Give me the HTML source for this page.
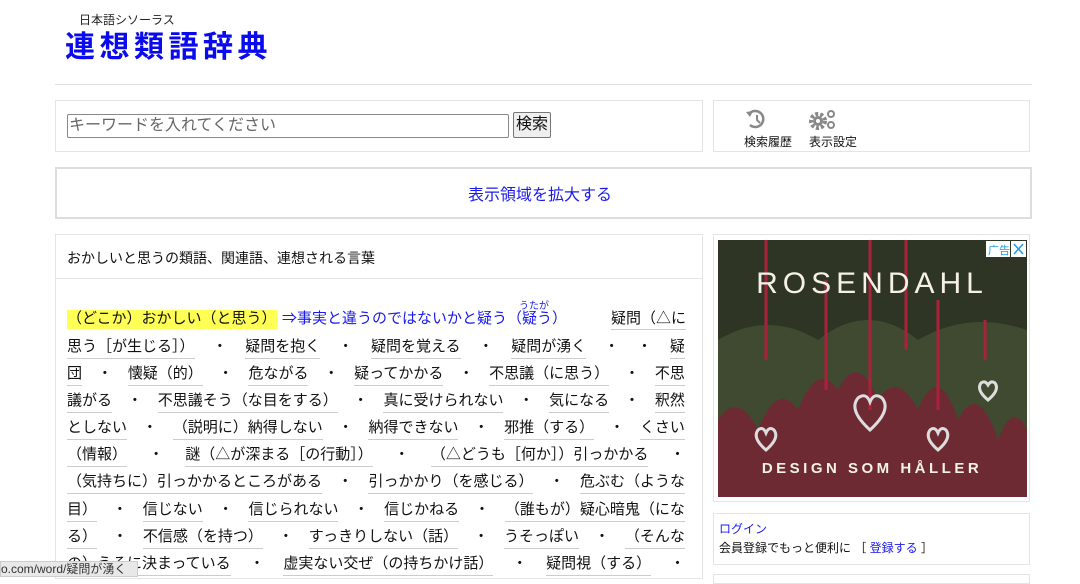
<!DOCTYPE html>
<html><head><meta charset="utf-8"><style>
*{margin:0;padding:0;box-sizing:border-box}
body{width:1080px;height:577px;overflow:hidden;background:#fff;font-family:"Liberation Sans","Noto Sans CJK JP",sans-serif;color:#111;position:relative}
.a{position:absolute}
.box{position:absolute;border:1px solid #e4e4e4;background:#fff}
.ln{position:absolute;left:67px;width:618px;font-size:15px;height:22px;line-height:20px;white-space:nowrap;display:flex;justify-content:space-between}
.ln span.w{border-bottom:1px solid #ccc}
</style></head><body>
<div class="a" style="left:79px;top:11px;font-size:12px;color:#222">日本語シソーラス</div>
<div class="a" style="left:65px;top:29px;font-size:30px;font-weight:bold;color:#0a0aee;letter-spacing:4.5px;line-height:38px">連想類語辞典</div>
<div class="a" style="left:55px;top:84px;width:977px;border-top:1px solid #e0e0e0"></div>

<div class="box" style="left:55px;top:100px;width:648px;height:52px"></div>
<div class="a" style="left:67px;top:114px;width:442px;height:24px;border:1px solid #888;border-radius:2px;font-size:16px;color:#666;line-height:22px;padding-left:1px">キーワードを入れてください</div>
<div class="a" style="left:513px;top:112px;width:38px;height:26px;border:1px solid #777;background:#efefef;font-size:16px;line-height:24px;text-align:center;border-radius:2px">検索</div>

<div class="box" style="left:713px;top:100px;width:317px;height:52px"></div>
<svg class="a" style="left:744px;top:108px" width="26" height="24" viewBox="0 0 26 24"><path d="M5 6 A8 8 0 1 1 6 17" fill="none" stroke="#888" stroke-width="2.5"/><path d="M2 4 L6 9 L9 3 Z" fill="#888"/><path d="M13 7 V12 L16 15" fill="none" stroke="#888" stroke-width="2"/></svg>
<div class="a" style="left:744px;top:133px;font-size:12px">検索履歴</div>
<svg class="a" style="left:808px;top:108px" width="30" height="24" viewBox="0 0 30 24"><circle cx="10" cy="13" r="7" fill="none" stroke="#888" stroke-width="4" stroke-dasharray="3 2"/><circle cx="10" cy="13" r="5" fill="#888"/><circle cx="10" cy="13" r="2" fill="#fff"/><circle cx="23" cy="6" r="3" fill="none" stroke="#888" stroke-width="2"/><circle cx="23" cy="17" r="3" fill="none" stroke="#888" stroke-width="2"/></svg>
<div class="a" style="left:809px;top:133px;font-size:12px">表示設定</div>

<div class="a" style="left:55px;top:167px;width:977px;height:52px;border:2px solid #ddd"></div>
<div class="a" style="left:55px;top:181px;width:970px;text-align:center;font-size:16px;color:#1a1aee">表示領域を拡大する</div>

<div class="box" style="left:55px;top:234px;width:648px;height:345px"></div>
<div class="a" style="left:55px;top:278px;width:648px;border-top:1px solid #e4e4e4"></div>
<div class="a" style="left:67px;top:248px;font-size:14px">おかしいと思うの類語、関連語、連想される言葉</div>

<div class="a" style="left:67px;top:310px;width:210px;height:19px;background:#ffff55"></div>
<div class="a" style="left:67px;top:309px;font-size:15px;line-height:20px;white-space:nowrap">（どこか）おかしい（と思う）</div>
<div class="a" style="left:282px;top:309px;font-size:15px;line-height:20px;color:#1a1aee;white-space:nowrap">⇒事実と違うのではないかと疑う（疑う）</div>
<div class="a" style="left:519px;top:297px;font-size:10px;color:#1a1aee">うたが</div>
<div class="a" style="left:611px;top:309px;font-size:15px;line-height:20px;white-space:nowrap;border-bottom:1px solid #ccc">疑問（△に</div>

<div class="ln" style="top:337px"><span class="w">思う［が生じる］）</span><span>・</span><span class="w">疑問を抱く</span><span>・</span><span class="w">疑問を覚える</span><span>・</span><span class="w">疑問が湧く</span><span>・</span><span>・</span><span class="w">疑</span></div>
<div class="ln" style="top:364px"><span class="w">団</span><span>・</span><span class="w">懐疑（的）</span><span>・</span><span class="w">危ながる</span><span>・</span><span class="w">疑ってかかる</span><span>・</span><span class="w">不思議（に思う）</span><span>・</span><span class="w">不思</span></div>
<div class="ln" style="top:391px"><span class="w">議がる</span><span>・</span><span class="w">不思議そう（な目をする）</span><span>・</span><span class="w">真に受けられない</span><span>・</span><span class="w">気になる</span><span>・</span><span class="w">釈然</span></div>
<div class="ln" style="top:418px"><span class="w">としない</span><span>・</span><span class="w">（説明に）納得しない</span><span>・</span><span class="w">納得できない</span><span>・</span><span class="w">邪推（する）</span><span>・</span><span class="w">くさい</span></div>
<div class="ln" style="top:445px"><span class="w">（情報）</span><span>・</span><span class="w">謎（△が深まる［の行動］）</span><span>・</span><span class="w">（△どうも［何か］）引っかかる</span><span>・</span></div>
<div class="ln" style="top:472px"><span class="w">（気持ちに）引っかかるところがある</span><span>・</span><span class="w">引っかかり（を感じる）</span><span>・</span><span class="w">危ぶむ（ような</span></div>
<div class="ln" style="top:500px"><span class="w">目）</span><span>・</span><span class="w">信じない</span><span>・</span><span class="w">信じられない</span><span>・</span><span class="w">信じかねる</span><span>・</span><span class="w">（誰もが）疑心暗鬼（にな</span></div>
<div class="ln" style="top:527px"><span class="w">る）</span><span>・</span><span class="w">不信感（を持つ）</span><span>・</span><span class="w">すっきりしない（話）</span><span>・</span><span class="w">うそっぽい</span><span>・</span><span class="w">（そんな</span></div>
<div class="ln" style="top:554px"><span class="w">の）うそに決まっている</span><span>・</span><span class="w">虚実ない交ぜ（の持ちかけ話）</span><span>・</span><span class="w">疑問視（する）</span><span>・</span></div>
<div class="a" style="left:0;top:561px;width:138px;height:16px;background:#e8e8e8;border:1px solid #ccc;font-size:12px;line-height:14px;color:#333;white-space:nowrap;overflow:hidden">o.com/word/疑問が湧く</div>

<div class="box" style="left:713px;top:234px;width:317px;height:268px"></div>
<svg class="a" style="left:718px;top:240px" width="309" height="257" viewBox="0 0 309 257">
<rect width="309" height="257" fill="#6e2a33"/>
<path d="M0 0 H309 V190 Q295 160 280 200 Q260 140 240 180 Q220 120 200 170 Q180 130 160 160 Q140 110 120 150 Q100 120 80 170 Q60 140 40 190 Q20 150 0 180Z" fill="#3f4a30"/>
<path d="M0 0 H309 V90 Q250 70 200 100 Q150 60 100 100 Q50 70 0 100Z" fill="#2e3524"/>
<g stroke="#a8223a" stroke-width="3"><line x1="48" y1="0" x2="48" y2="120"/><line x1="108" y1="40" x2="108" y2="150"/><line x1="152" y1="0" x2="152" y2="170"/><line x1="220" y1="60" x2="220" y2="170"/><line x1="267" y1="80" x2="267" y2="120"/><line x1="188" y1="0" x2="188" y2="110"/></g>
<g fill="none" stroke="#ddd" stroke-width="3"><path d="M152 190 q-22-20-12-32 q8-6 12 4 q4-10 12-4 q10 12-12 32Z"/><path d="M48 210 q-14-12-8-20 q5-4 8 3 q3-7 8-3 q6 8-8 20Z"/><path d="M220 210 q-14-12-8-20 q5-4 8 3 q3-7 8-3 q6 8-8 20Z"/><path d="M270 160 q-12-10-7-17 q4-3 7 2 q3-5 7-2 q5 7-7 17Z"/></g>
<text x="154" y="53" fill="#f5f0e8" font-size="30" text-anchor="middle" letter-spacing="5" font-family="Liberation Sans">ROSENDAHL</text>
<text x="154" y="233" fill="#f5f0e8" font-size="15" font-weight="bold" text-anchor="middle" letter-spacing="3.5" font-family="Liberation Sans">DESIGN SOM HÅLLER</text>
<rect x="268" y="1" width="24" height="16" fill="#fff"/><text x="270" y="14" font-size="11" fill="#1a9ee0">广告</text>
<rect x="293" y="1" width="15" height="16" fill="#fff"/><path d="M296 4 L305 14 M305 4 L296 14" stroke="#1a9ee0" stroke-width="1.5"/>
</svg>

<div class="box" style="left:713px;top:513px;width:317px;height:52px"></div>
<div class="a" style="left:719px;top:520px;font-size:12px;color:#1a1aee">ログイン</div>
<div class="a" style="left:719px;top:539px;font-size:12px">会員登録でもっと便利に ［ <span style="color:#1a1aee">登録する</span> ］</div>
<div class="box" style="left:713px;top:574px;width:317px;height:10px"></div>
</body></html>
